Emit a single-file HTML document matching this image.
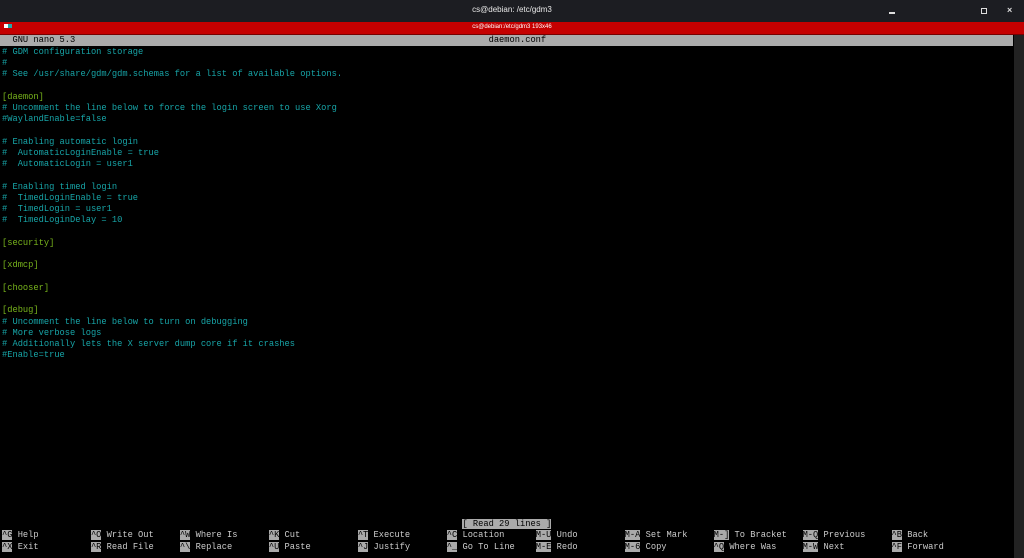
<!DOCTYPE html>
<html><head><meta charset="utf-8"><style>
html,body{margin:0;padding:0;width:1024px;height:558px;overflow:hidden;background:#000;}
#tb{position:absolute;left:0;top:0;width:1024px;height:22px;background:#1c1d22;}
#tb .t{position:absolute;width:100%;top:5px;text-align:center;color:#e8e8e8;font:8px "Liberation Sans",sans-serif;}
#red{position:absolute;left:0;top:22px;width:1024px;height:12px;background:#c50000;border-bottom:1px solid #700;}
#red .t{position:absolute;width:100%;top:2px;text-align:center;color:#fff;font:6px "Liberation Sans",sans-serif;}
#sb{position:absolute;left:1014px;top:35px;width:10px;height:523px;background:#222;}
#w{position:absolute;left:0;top:1px;width:1024px;height:557px;}
.r{position:absolute;left:2px;height:11.25px;line-height:11.25px;font-family:"Liberation Mono",monospace;font-size:8.72px;white-space:pre;color:#ccc;}
.c{color:#17a5a8}.g{color:#78b41c}
.k{background:#aaa;color:#000}
#hd{position:absolute;left:0;top:34.5px;width:1013px;height:11px;background:#ababab;}
</style></head><body>
<div id="tb"><div class="t">cs@debian: /etc/gdm3</div>
<div style="position:absolute;left:889px;top:12px;width:6px;height:1.5px;background:#ddd"></div>
<div style="position:absolute;left:981px;top:8px;width:4px;height:4px;border:1.2px solid #ddd"></div>
<div style="position:absolute;left:1007px;top:5px;color:#ddd;font:bold 9px 'Liberation Sans',sans-serif">×</div>
</div>
<div id="red"><div class="t">cs@debian:/etc/gdm3 193x46</div>
<div style="position:absolute;left:4px;top:2px;width:4px;height:4px;background:#fff"></div>
<div style="position:absolute;left:8px;top:2px;width:4px;height:4px;background:#2aa"></div>
</div>
<div id="hd"></div>
<div id="sb"></div>
<div class="r" style="top:34.5px;color:#000">  GNU nano 5.3                                                                               daemon.conf</div>
<div id="w">
<div class="r c" style="top:45.5px"># GDM configuration storage</div>
<div class="r c" style="top:56.75px">#</div>
<div class="r c" style="top:68px"># See /usr/share/gdm/gdm.schemas for a list of available options.</div>
<div class="r g" style="top:90.5px">[daemon]</div>
<div class="r c" style="top:101.75px"># Uncomment the line below to force the login screen to use Xorg</div>
<div class="r c" style="top:113px">#WaylandEnable=false</div>
<div class="r c" style="top:135.5px"># Enabling automatic login</div>
<div class="r c" style="top:146.75px">#  AutomaticLoginEnable = true</div>
<div class="r c" style="top:158px">#  AutomaticLogin = user1</div>
<div class="r c" style="top:180.5px"># Enabling timed login</div>
<div class="r c" style="top:191.75px">#  TimedLoginEnable = true</div>
<div class="r c" style="top:203px">#  TimedLogin = user1</div>
<div class="r c" style="top:214.25px">#  TimedLoginDelay = 10</div>
<div class="r g" style="top:236.75px">[security]</div>
<div class="r g" style="top:259.25px">[xdmcp]</div>
<div class="r g" style="top:281.75px">[chooser]</div>
<div class="r g" style="top:304.25px">[debug]</div>
<div class="r c" style="top:315.5px"># Uncomment the line below to turn on debugging</div>
<div class="r c" style="top:326.75px"># More verbose logs</div>
<div class="r c" style="top:338px"># Additionally lets the X server dump core if it crashes</div>
<div class="r c" style="top:349.25px">#Enable=true</div>
<div class="r" style="top:518px">                                                                                        <span class="k">[ Read 29 lines ]</span></div>
<div class="r" style="top:529.25px"><span class="k">^G</span> Help          <span class="k">^O</span> Write Out     <span class="k">^W</span> Where Is      <span class="k">^K</span> Cut           <span class="k">^T</span> Execute       <span class="k">^C</span> Location      <span class="k">M-U</span> Undo         <span class="k">M-A</span> Set Mark     <span class="k">M-]</span> To Bracket   <span class="k">M-Q</span> Previous     <span class="k">^B</span> Back</div>
<div class="r" style="top:540.5px"><span class="k">^X</span> Exit          <span class="k">^R</span> Read File     <span class="k">^\</span> Replace       <span class="k">^U</span> Paste         <span class="k">^J</span> Justify       <span class="k">^_</span> Go To Line    <span class="k">M-E</span> Redo         <span class="k">M-6</span> Copy         <span class="k">^Q</span> Where Was     <span class="k">M-W</span> Next         <span class="k">^F</span> Forward</div>
</div>
</body></html>
